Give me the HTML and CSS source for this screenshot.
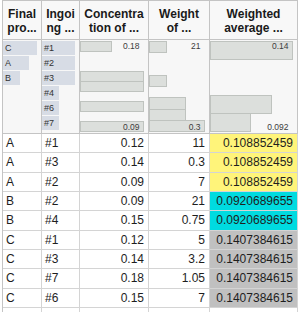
FILE: index.html
```html
<!DOCTYPE html>
<html lang="en">
<head>
<meta charset="UTF-8" />
<title>Weighted average</title>
<link rel="stylesheet" href="styles.css">
</head>
<body>
<div class="grid">
  <div class="hd">Final<br>pro...</div>
  <div class="hd">Ingoi<br>ng ...</div>
  <div class="hd">Concentra<br>tion of ...</div>
  <div class="hd">Weight<br>of ...</div>
  <div class="hd">Weighted<br>average ...</div>

  <!-- summary row -->
  <div class="sum">
    <div class="cat" style="width:34px">C</div>
    <div class="cat" style="width:25.5px">A</div>
    <div class="cat" style="width:17px">B</div>
  </div>
  <div class="sum">
    <div class="cat" style="width:33.3px">#1</div>
    <div class="cat" style="width:33.3px">#2</div>
    <div class="cat" style="width:33.3px">#3</div>
    <div class="cat" style="width:16.7px">#4</div>
    <div class="cat" style="width:16.7px">#6</div>
    <div class="cat" style="width:16.7px">#7</div>
  </div>
  <div class="sum">
    <div class="hist">
      <div class="bin"><div class="bar" style="width:50%"></div></div>
      <div class="bin"></div>
      <div class="bin"></div>
      <div class="bin"><div class="bar" style="width:100%"></div></div>
      <div class="bin"><div class="bar" style="width:100%"></div></div>
      <div class="bin"></div>
      <div class="bin"><div class="bar" style="width:100%"></div></div>
      <div class="bin"></div>
      <div class="bin"><div class="bar" style="width:100%"></div></div>
      <span class="lbl top">0.18</span>
      <span class="lbl bot">0.09</span>
    </div>
  </div>
  <div class="sum">
    <div class="hist">
      <div class="bin"><div class="bar" style="width:33.3%"></div></div>
      <div class="bin"></div>
      <div class="bin"></div>
      <div class="bin"><div class="bar" style="width:33.3%"></div></div>
      <div class="bin"></div>
      <div class="bin"><div class="bar" style="width:66.7%"></div></div>
      <div class="bin"><div class="bar" style="width:66.7%"></div></div>
      <div class="bin"><div class="bar" style="width:100%"></div></div>
      <span class="lbl top">21</span>
      <span class="lbl bot">0.3</span>
    </div>
  </div>
  <div class="sum">
    <div class="hist">
      <div class="bin"><div class="bar" style="width:100%"></div></div>
      <div class="bin"></div>
      <div class="bin"></div>
      <div class="bin"><div class="bar" style="width:75%"></div></div>
      <div class="bin"><div class="bar" style="width:50%"></div></div>
      <span class="lbl top">0.14</span>
      <span class="lbl bot">0.092</span>
    </div>
  </div>

  <!-- data rows -->
  <div class="cell">A</div><div class="cell">#1</div><div class="cell num">0.12</div><div class="cell num">11</div><div class="cell num yel">0.108852459</div>
  <div class="cell">A</div><div class="cell">#3</div><div class="cell num">0.14</div><div class="cell num">0.3</div><div class="cell num yel">0.108852459</div>
  <div class="cell">A</div><div class="cell">#2</div><div class="cell num">0.09</div><div class="cell num">7</div><div class="cell num yel">0.108852459</div>
  <div class="cell">B</div><div class="cell">#2</div><div class="cell num">0.09</div><div class="cell num">21</div><div class="cell num cyan">0.0920689655</div>
  <div class="cell">B</div><div class="cell">#4</div><div class="cell num">0.15</div><div class="cell num">0.75</div><div class="cell num cyan">0.0920689655</div>
  <div class="cell">C</div><div class="cell">#1</div><div class="cell num">0.12</div><div class="cell num">5</div><div class="cell num gray">0.1407384615</div>
  <div class="cell">C</div><div class="cell">#3</div><div class="cell num">0.14</div><div class="cell num">3.2</div><div class="cell num gray">0.1407384615</div>
  <div class="cell">C</div><div class="cell">#7</div><div class="cell num">0.18</div><div class="cell num">1.05</div><div class="cell num gray">0.1407384615</div>
  <div class="cell">C</div><div class="cell">#6</div><div class="cell num">0.15</div><div class="cell num">7</div><div class="cell num gray">0.1407384615</div>
  <div class="cell"></div><div class="cell"></div><div class="cell"></div><div class="cell"></div><div class="cell"></div>
</div>
</body>
</html>
```

FILE: styles.css
```css
body {
  margin: 0;
  background-color: #ffffff;
  font-family: "Liberation Sans", Arial, sans-serif;
  color: #1e1e1e;
  overflow: hidden;
}

.grid {
  display: grid;
  grid-template-columns: 39px 38px 69px 61px 88px;
  grid-template-rows: 39px 94px repeat(10, 19.33px);
  width: max-content;
  margin-left: 2px;
  border-top: 1px solid #c4c4c4;
  border-left: 1px solid #c4c4c4;
}

.grid > div {
  box-sizing: border-box;
  border-right: 1px solid #d4d4d4;
  border-bottom: 1px solid #d4d4d4;
}

.hd {
  background-color: #f8f8f8;
  border-color: #c4c4c4 !important;
  font-size: 12px;
  font-weight: bold;
  line-height: 14px;
  text-align: center;
  padding-top: 6px;
  color: #1a1a1a;
}

.sum {
  background-color: #f7f7f7;
  border-color: #c4c4c4 !important;
  padding-top: 1px;
}

.cat {
  height: 14px;
  margin-bottom: 1px;
  background-color: #d7dce5;
  font-size: 9px;
  line-height: 14px;
  padding-left: 2px;
  box-sizing: border-box;
  color: #333;
  white-space: nowrap;
}

.hist {
  position: relative;
  height: 90px;
  margin-right: 4.5px;
  display: flex;
  flex-direction: column;
}

.bin {
  flex: 1;
}

/* one px taller so stacked bars share their edge line */
.bar {
  height: calc(100% + 1px);
  box-sizing: border-box;
  background-color: #dcdfdc;
  border: 1px solid #bfc3bf;
}

.lbl {
  position: absolute;
  right: 4px;
  font-size: 8.5px;
  line-height: 10px;
  color: #3c3c3c;
}

.lbl.top { top: 0; }
.lbl.bot { bottom: -1px; }

.cell {
  font-size: 12px;
  line-height: 14px;
  padding: 2px 4px 0 3px;
  white-space: nowrap;
  overflow: hidden;
}

.num {
  text-align: right;
}

.yel { background-color: #fff47a; }
.cyan { background-color: #00dbe0; }
.gray { background-color: #c0c0c0; }
```
